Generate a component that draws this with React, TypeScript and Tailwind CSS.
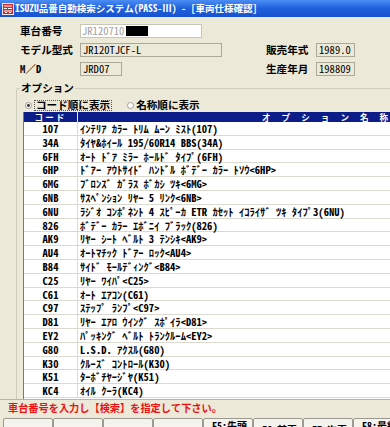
import React from "react";

const rows: [string, string][] = [
  ["107", "ｲﾝﾃﾘｱ ｶﾗｰ ﾄﾘﾑ ﾑｰﾝ ﾐｽﾄ(107)"],
  ["34A", "ﾀｲﾔ&ﾎｲｰﾙ 195/60R14 BBS(34A)"],
  ["6FH", "ｵｰﾄ ﾄﾞｱ ﾐﾗｰ ﾎｰﾙﾄﾞ ﾀｲﾌﾟ(6FH)"],
  ["6HP", "ﾄﾞｱｰ ｱｳﾄｻｲﾄﾞ ﾊﾝﾄﾞﾙ ﾎﾞﾃﾞｰ ｶﾗｰ ﾄｿｳ<6HP>"],
  ["6MG", "ﾌﾞﾛﾝｽﾞ ｶﾞﾗｽ ﾎﾞｶｼ ﾂｷ<6MG>"],
  ["6NB", "ｻｽﾍﾟﾝｼｮﾝ ﾘﾔｰ 5 ﾘﾝｸ<6NB>"],
  ["6NU", "ﾗｼﾞｵ ｺﾝﾎﾟﾈﾝﾄ 4 ｽﾋﾟｰｶ ETR ｶｾｯﾄ ｲｺﾗｲｻﾞ ﾂｷ ﾀｲﾌﾟ3(6NU)"],
  ["826", "ﾎﾞﾃﾞｰ ｶﾗｰ ｴﾎﾞﾆｲ ﾌﾞﾗｯｸ(826)"],
  ["AK9", "ﾘﾔｰ ｼｰﾄ ﾍﾞﾙﾄ 3 ﾃﾝｼｷ<AK9>"],
  ["AU4", "ｵｰﾄﾏﾁｯｸ ﾄﾞｱｰ ﾛｯｸ<AU4>"],
  ["B84", "ｻｲﾄﾞ ﾓｰﾙﾃﾞｨﾝｸﾞ<B84>"],
  ["C25", "ﾘﾔｰ ﾜｲﾊﾟ<C25>"],
  ["C61", "ｵｰﾄ ｴｱｺﾝ(C61)"],
  ["C97", "ｽﾃｯﾌﾟ ﾗﾝﾌﾟ<C97>"],
  ["D81", "ﾘﾔｰ ｴｱﾛ ｳｲﾝｸﾞ ｽﾎﾟｲﾗ<D81>"],
  ["EY2", "ﾊﾟｯｷﾝｸﾞ ﾍﾞﾙﾄ ﾄﾗﾝｸﾙｰﾑ<EY2>"],
  ["G80", "L.S.D. ｱｸｽﾙ(G80)"],
  ["K30", "ｸﾙｰｽﾞ ｺﾝﾄﾛｰﾙ(K30)"],
  ["K51", "ﾀｰﾎﾞﾁﾔｰｼﾞﾔ(K51)"],
  ["KC4", "ｵｲﾙ ｸｰﾗ(KC4)"],
];

function Radio({ checked }: { checked?: boolean }) {
  return (
    <svg width="7" height="7" viewBox="0 0 7 7" className="shrink-0">
      <circle cx="3.5" cy="3.5" r="3" fill="#ffffff" stroke="#9a9a9a" strokeWidth="1" />
      {checked && <circle cx="3.5" cy="3.5" r="1.4" fill="#2a2a2a" />}
    </svg>
  );
}

export default function App() {
  return (
    <div className="w-[390px] h-[427px] overflow-hidden bg-[#ece9d8] flex flex-col font-['Noto_Sans_Mono_CJK_JP','Noto_Sans_CJK_JP',monospace] text-[10.6px] text-black">
      {/* Title bar */}
      <div className="h-[17px] shrink-0 flex items-center bg-linear-to-b from-[#4a8ef4] via-[#1f5fdc] to-[#1853cf] pl-[2px]">
        <svg width="12" height="12" viewBox="0 0 12 12" className="shrink-0">
          <rect x="0" y="0" width="12" height="12" fill="#e8e8e8" />
          <rect x="1" y="1" width="10" height="10" fill="#d8262c" />
          <rect x="2" y="2.5" width="8" height="1" fill="#ffffff" />
          <rect x="2" y="5" width="3" height="1" fill="#ffffff" />
          <rect x="6" y="5" width="4" height="1" fill="#ffffff" />
          <rect x="2" y="7.5" width="8" height="1" fill="#ffffff" />
          <rect x="3" y="9" width="2" height="1" fill="#ffffff" />
          <rect x="7" y="9" width="2" height="1" fill="#ffffff" />
        </svg>
        <span className="ml-[1px] text-white text-[9.5px] font-bold leading-none whitespace-nowrap">
          ISUZU品番自動検索システム(PASS-Ⅲ) - [車両仕様確認]
        </span>
      </div>

      {/* Fields */}
      <div className="pl-[20px] pt-[7px] flex flex-col gap-[5px] shrink-0 font-semibold">
        <div className="flex items-center h-[14px]">
          <span className="w-[60px] leading-none">車台番号</span>
          <div className="w-[122px] h-[14px] bg-white border border-[#c9c6b6] flex items-center pl-[1px] text-[#a2a2a2] font-medium leading-none">
            JR120710
            <span className="inline-block w-[22px] h-[10px] bg-black ml-[2px]" />
          </div>
        </div>
        <div className="flex items-center h-[14px]">
          <span className="w-[60px] leading-none">モデル型式</span>
          <div className="w-[142px] h-[14px] border border-[#aca899] flex items-center pl-[2px] font-medium leading-none">
            JR120TJCF-L
          </div>
          <span className="ml-[44px] w-[50px] leading-none">販売年式</span>
          <div className="w-[39px] h-[14px] border border-[#aca899] flex items-center pl-[2px] font-medium leading-none">
            1989.0
          </div>
        </div>
        <div className="flex items-center h-[14px]">
          <span className="w-[60px] leading-none">M／D</span>
          <div className="w-[42px] h-[14px] border border-[#aca899] flex items-center pl-[2px] font-medium leading-none">
            JRD07
          </div>
          <span className="ml-[144px] w-[50px] leading-none">生産年月</span>
          <div className="w-[39px] h-[14px] border border-[#aca899] flex items-center pl-[2px] font-medium leading-none">
            198809
          </div>
        </div>
      </div>

      {/* Option group */}
      <div className="ml-[16px] mt-[12px] h-[311px] shrink-0 border-l border-t border-[#cfcdbd] rounded-tl-[3px] flex flex-col">
        <span className="-mt-[7px] ml-[3px] self-start bg-[#ece9d8] px-[1px] leading-[12px] font-semibold">
          オプション
        </span>
        <div className="flex items-center h-[11px] mt-[6px] pl-[8px] font-semibold">
          <Radio checked />
          <span className="ml-[2px] px-[1px] h-[11px] flex items-center border border-dotted border-[#555] leading-none">
            コード順に表示
          </span>
          <span className="ml-[15px]">
            <Radio />
          </span>
          <span className="ml-[2px] leading-none">名称順に表示</span>
        </div>
        <div className="ml-[6px] mt-[1px] w-[600px] flex-1 min-h-0 overflow-hidden bg-white border-l border-[#7a7a7a] flex flex-col font-semibold">
          <div className="h-[10px] flex shrink-0 bg-[#e8e8e8]">
            <div className="w-[53px] bg-[#0c1d8a] text-white text-[8.6px] leading-[10px] text-center tracking-[2px]">
              コード
            </div>
            <div className="ml-[1px] pl-[184px] flex-1 bg-[#0c1d8a] text-white text-[8.6px] leading-[10px] tracking-[11px] whitespace-nowrap">
              オプション名称
            </div>
          </div>
          {rows.map(([code, name]) => (
            <div key={code} className="h-[13.8px] shrink-0 flex border-b border-[#dcdad0]">
              <div className="w-[54px] border-r border-[#dcdad0] text-center leading-[13px]">
                {code}
              </div>
              <div className="pl-[2px] leading-[13px] whitespace-nowrap">{name}</div>
            </div>
          ))}
        </div>
      </div>

      {/* Status */}
      <div className="h-[18px] shrink-0 border-t border-[#b8b5a5] flex items-center pl-[8px] text-[#ee1111] font-semibold text-[10.2px] leading-none">
        車台番号を入力し【検索】を指定して下さい。
      </div>

      {/* Function keys */}
      <div className="flex pl-[3px] pt-[1px] font-semibold text-[10px]">
        {["", "", "", "", "F5:先頭", "F6:前頁", "F7:次頁", "F8:最終"].map((t, i) => (
          <div
            key={i}
            className={`w-[50px] h-[20px] shrink-0 bg-[#f4f3ee] border border-[#9c9a90] rounded-[2px] pl-[8px] leading-none whitespace-nowrap ${
              i === 5 || i === 6 ? "pt-[6px]" : "pt-[2px]"
            }`}
          >
            {t}
          </div>
        ))}
      </div>
    </div>
  );
}
